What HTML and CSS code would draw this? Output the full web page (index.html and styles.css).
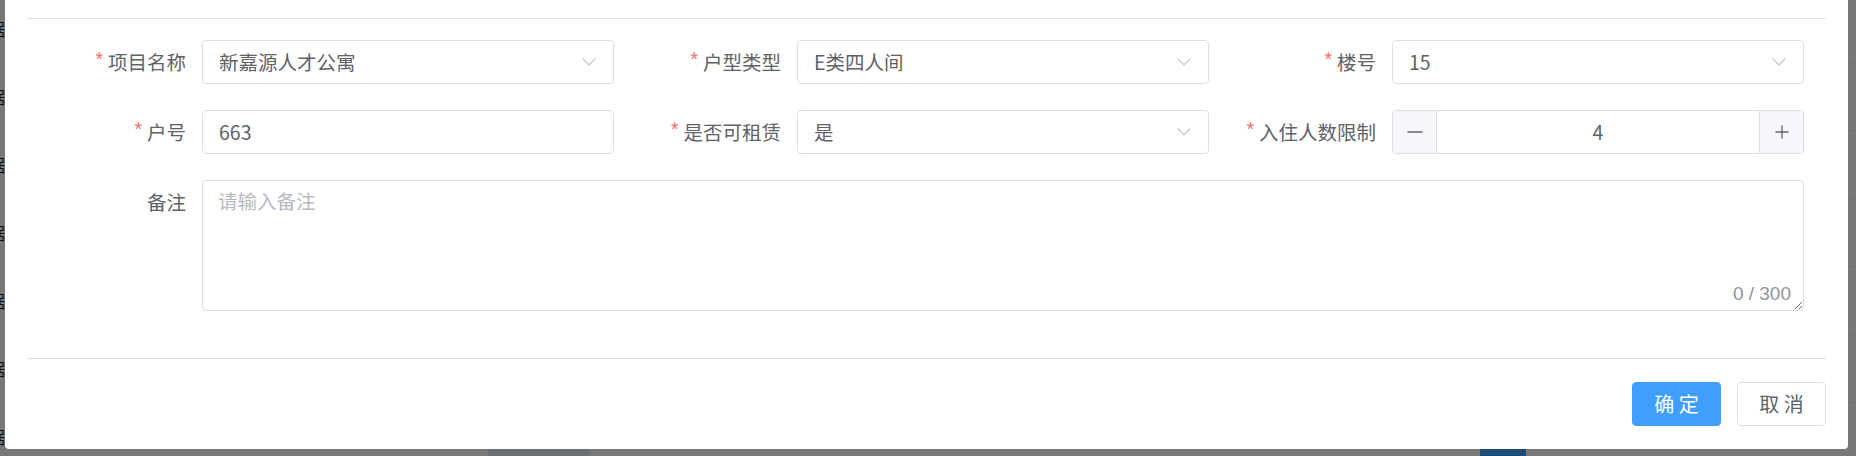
FILE: index.html
```html
<!DOCTYPE html>
<html lang="zh-CN">
<head>
<meta charset="utf-8">
<title>编辑房源</title>
<link rel="stylesheet" href="styles.css">
</head>
<body>
<div class="page">
  <div class="bg-row"><span class="bg-cell">据</span></div>
  <div class="bg-row"><span class="bg-cell">据</span></div>
  <div class="bg-row"><span class="bg-cell">据</span></div>
  <div class="bg-row"><span class="bg-cell">据</span></div>
  <div class="bg-row"><span class="bg-cell">据</span></div>
  <div class="bg-row"><span class="bg-cell">据</span></div>
  <div class="bg-row">
    <span class="bg-cell">据</span>
    <span class="bg-btn bg-btn-plain"></span>
    <span class="bg-btn bg-btn-primary"></span>
  </div>
</div>
<div class="mask"></div>
<div class="dialog">
  <div class="dialog-header"></div>
  <div class="dialog-body">
    <form class="form">
      <div class="item">
        <label class="label req">项目名称</label>
        <div class="control select"><span class="value">新嘉源人才公寓</span><svg class="arrow" width="14" height="8" viewBox="0 0 14 8"><polyline points="0.7,0.7 7,7 13.3,0.7" fill="none" stroke="#c0c4cc" stroke-width="1.2"/></svg></div>
      </div>
      <div class="item">
        <label class="label req">户型类型</label>
        <div class="control select"><span class="value">E类四人间</span><svg class="arrow" width="14" height="8" viewBox="0 0 14 8"><polyline points="0.7,0.7 7,7 13.3,0.7" fill="none" stroke="#c0c4cc" stroke-width="1.2"/></svg></div>
      </div>
      <div class="item">
        <label class="label req">楼号</label>
        <div class="control select"><span class="value">15</span><svg class="arrow" width="14" height="8" viewBox="0 0 14 8"><polyline points="0.7,0.7 7,7 13.3,0.7" fill="none" stroke="#c0c4cc" stroke-width="1.2"/></svg></div>
      </div>
      <div class="item">
        <label class="label req">户号</label>
        <div class="control"><span class="value">663</span></div>
      </div>
      <div class="item">
        <label class="label req">是否可租赁</label>
        <div class="control select"><span class="value">是</span><svg class="arrow" width="14" height="8" viewBox="0 0 14 8"><polyline points="0.7,0.7 7,7 13.3,0.7" fill="none" stroke="#c0c4cc" stroke-width="1.2"/></svg></div>
      </div>
      <div class="item">
        <label class="label req">入住人数限制</label>
        <div class="control stepper">
          <span class="step step-minus"><svg width="16" height="16" viewBox="0 0 16 16"><line x1="0.5" y1="8" x2="15.5" y2="8" stroke="#606266" stroke-width="1.3"/></svg></span>
          <span class="step-value">4</span>
          <span class="step step-plus"><svg width="14" height="14" viewBox="0 0 14 14"><line x1="0.5" y1="7" x2="13.5" y2="7" stroke="#606266" stroke-width="1.3"/><line x1="7" y1="0.5" x2="7" y2="13.5" stroke="#606266" stroke-width="1.3"/></svg></span>
        </div>
      </div>
      <div class="item item-full">
        <label class="label label-top">备注</label>
        <div class="textarea-wrap">
          <textarea class="textarea" placeholder="请输入备注"></textarea>
          <span class="count">0 / 300</span>
        </div>
      </div>
    </form>
  </div>
  <div class="dialog-footer">
    <button class="btn btn-primary" type="button">确 定</button>
    <button class="btn" type="button">取 消</button>
  </div>
</div>
</body>
</html>
```

FILE: styles.css
```css
* {
  box-sizing: border-box;
  margin: 0;
  padding: 0;
}

html,
body {
  width: 1856px;
  height: 456px;
  overflow: hidden;
}

body {
  position: relative;
  background: #ffffff;
  font-family: "Noto Sans CJK SC", "Liberation Sans", sans-serif;
  color: #606266;
}

/* background page under the mask */
.page {
  display: flex;
  flex-direction: column;
  margin-top: -5px;
}

.bg-row {
  height: 68px;
  flex: none;
  display: flex;
  align-items: center;
  border-bottom: 1px solid #ebeef5;
  font-size: 17px;
  color: #1f1f1f;
}

.bg-cell {
  margin-left: -12px;
}

.bg-btn {
  align-self: flex-start;
  margin-top: 40px;
  height: 34px;
  border-radius: 4px;
}

.bg-btn-plain {
  margin-left: 483px;
  width: 102px;
  background: #e6eefa;
}

.bg-btn-primary {
  margin-left: 890px;
  width: 46px;
  background: #409eff;
}

.mask {
  position: fixed;
  inset: 0;
  background: rgba(0, 0, 0, 0.53);
}

/* dialog */
.dialog {
  position: absolute;
  left: 5px;
  top: -30px;
  width: 1843px;
  background: #ffffff;
  border-radius: 4px;
}

.dialog-header {
  height: 49px;
  margin: 0 22px;
  border-bottom: 1px solid #dcdfe6;
}

.dialog-body {
  padding: 21px 0 47px 14px;
}

.form {
  display: grid;
  grid-template-columns: repeat(3, 595px);
  grid-auto-rows: auto;
  row-gap: 26px;
}

.item {
  display: flex;
  align-items: flex-start;
}

.item-full {
  grid-column: 1 / -1;
}

.label {
  flex: none;
  display: flex;
  align-items: center;
  justify-content: flex-end;
  width: 183px;
  height: 44px;
  padding-right: 16px;
  font-size: 19.5px;
  line-height: 1;
  color: #606266;
}

.label.req::before {
  content: "*";
  color: #f56c6c;
  margin-right: 5px;
  margin-top: -4px;
  font-family: "Liberation Sans", sans-serif;
}

.control {
  flex: 1;
  height: 44px;
  display: flex;
  align-items: center;
  border: 1px solid #dcdfe6;
  border-radius: 4px;
  padding: 0 17px 0 16px;
  font-size: 19.5px;
  color: #606266;
  background: #fff;
}

.value {
  flex: 1;
  line-height: 42px;
}

.arrow {
  flex: none;
  display: block;
}

.stepper {
  padding: 0;
  overflow: hidden;
}

.step {
  flex: none;
  width: 44px;
  height: 100%;
  display: flex;
  align-items: center;
  justify-content: center;
  background: #f5f7fa;
}

.step svg {
  display: block;
}

.step-minus {
  border-right: 1px solid #dcdfe6;
}

.step-plus {
  border-left: 1px solid #dcdfe6;
}

.step-value {
  flex: 1;
  text-align: center;
  line-height: 42px;
}

.textarea-wrap {
  flex: 1;
  position: relative;
  height: 131px;
}

.textarea {
  display: block;
  width: 100%;
  height: 131px;
  border: 1px solid #dcdfe6;
  border-radius: 4px;
  padding: 6px 15px;
  font-family: inherit;
  font-size: 19.5px;
  line-height: 28px;
  color: #606266;
  resize: vertical;
  outline: none;
}

.textarea::placeholder {
  color: #b6b9bf;
}

.count {
  position: absolute;
  right: 13px;
  bottom: 6px;
  font-family: "Liberation Sans", sans-serif;
  font-size: 19px;
  line-height: 22px;
  color: #909399;
  background: #fff;
}

.dialog-footer {
  margin: 0 22px;
  border-top: 1px solid #dcdfe6;
  padding: 23px 0 23px;
  display: flex;
  justify-content: flex-end;
  gap: 16px;
}

.btn {
  width: 89px;
  height: 44px;
  border: 1px solid #dcdfe6;
  border-radius: 4px;
  background: #fff;
  color: #606266;
  font-family: "Noto Sans CJK SC", sans-serif;
  font-size: 20px;
  line-height: 42px;
  cursor: pointer;
}

.btn-primary {
  background: #409eff;
  border-color: #409eff;
  color: #fff;
}
```
